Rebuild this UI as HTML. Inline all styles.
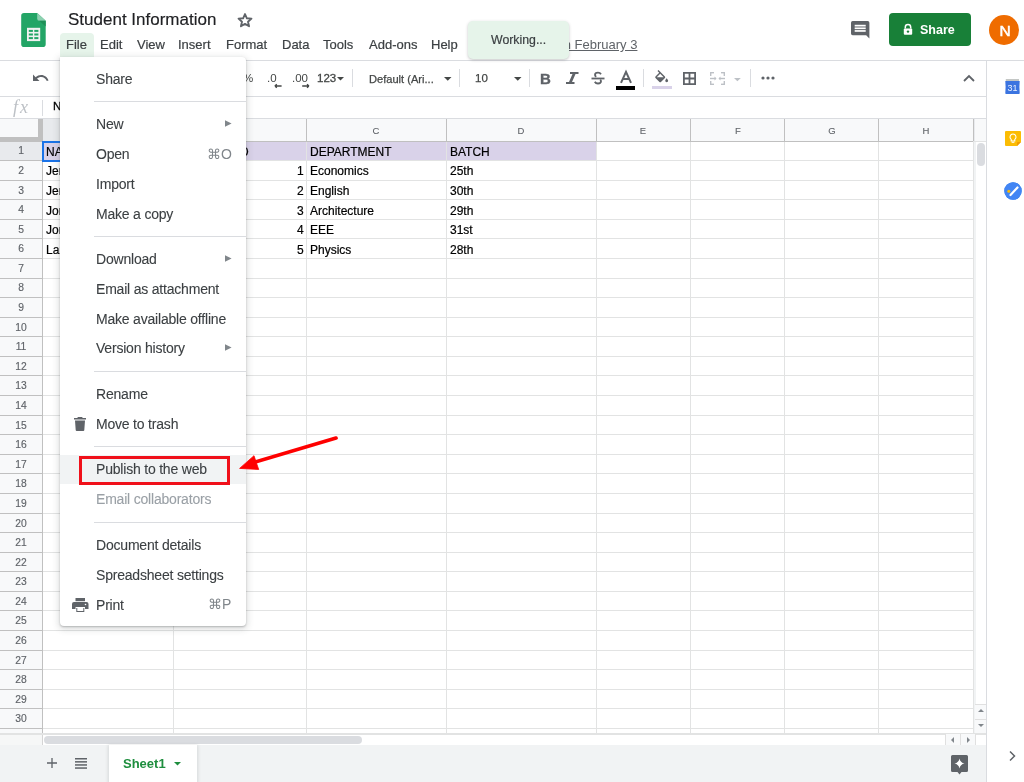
<!DOCTYPE html>
<html><head><meta charset="utf-8"><style>
html,body{margin:0;padding:0;width:1024px;height:782px;overflow:hidden;background:#fff;position:relative}
.t{position:absolute;white-space:nowrap;line-height:1;font-family:"Liberation Sans", sans-serif;will-change:transform}
.r{position:absolute;box-sizing:content-box}
svg.r{overflow:visible}
</style></head><body>
<div class="r" style="left:0.00px;top:118.50px;width:986.00px;height:22.50px;background:#f8f9fa;"></div>
<div class="r" style="left:0.00px;top:141.00px;width:42.50px;height:592.50px;background:#f8f9fa;"></div>
<div class="r" style="left:42.50px;top:118.50px;width:131.00px;height:22.50px;background:#e8eaed;"></div>
<div class="r" style="left:0.00px;top:141.00px;width:42.50px;height:19.50px;background:#e8eaed;"></div>
<div class="r" style="left:42.50px;top:141.00px;width:553.70px;height:19.50px;background:#d9d2e9;"></div>
<div class="r" style="left:42.50px;top:160.00px;width:930.90px;height:1.00px;background:#e2e3e3;"></div>
<div class="r" style="left:0.00px;top:160.00px;width:42.50px;height:1.00px;background:#c0c0c0;"></div>
<div class="r" style="left:42.50px;top:179.59px;width:930.90px;height:1.00px;background:#e2e3e3;"></div>
<div class="r" style="left:0.00px;top:179.59px;width:42.50px;height:1.00px;background:#c0c0c0;"></div>
<div class="r" style="left:42.50px;top:199.17px;width:930.90px;height:1.00px;background:#e2e3e3;"></div>
<div class="r" style="left:0.00px;top:199.17px;width:42.50px;height:1.00px;background:#c0c0c0;"></div>
<div class="r" style="left:42.50px;top:218.76px;width:930.90px;height:1.00px;background:#e2e3e3;"></div>
<div class="r" style="left:0.00px;top:218.76px;width:42.50px;height:1.00px;background:#c0c0c0;"></div>
<div class="r" style="left:42.50px;top:238.34px;width:930.90px;height:1.00px;background:#e2e3e3;"></div>
<div class="r" style="left:0.00px;top:238.34px;width:42.50px;height:1.00px;background:#c0c0c0;"></div>
<div class="r" style="left:42.50px;top:257.93px;width:930.90px;height:1.00px;background:#e2e3e3;"></div>
<div class="r" style="left:0.00px;top:257.93px;width:42.50px;height:1.00px;background:#c0c0c0;"></div>
<div class="r" style="left:42.50px;top:277.52px;width:930.90px;height:1.00px;background:#e2e3e3;"></div>
<div class="r" style="left:0.00px;top:277.52px;width:42.50px;height:1.00px;background:#c0c0c0;"></div>
<div class="r" style="left:42.50px;top:297.10px;width:930.90px;height:1.00px;background:#e2e3e3;"></div>
<div class="r" style="left:0.00px;top:297.10px;width:42.50px;height:1.00px;background:#c0c0c0;"></div>
<div class="r" style="left:42.50px;top:316.69px;width:930.90px;height:1.00px;background:#e2e3e3;"></div>
<div class="r" style="left:0.00px;top:316.69px;width:42.50px;height:1.00px;background:#c0c0c0;"></div>
<div class="r" style="left:42.50px;top:336.27px;width:930.90px;height:1.00px;background:#e2e3e3;"></div>
<div class="r" style="left:0.00px;top:336.27px;width:42.50px;height:1.00px;background:#c0c0c0;"></div>
<div class="r" style="left:42.50px;top:355.86px;width:930.90px;height:1.00px;background:#e2e3e3;"></div>
<div class="r" style="left:0.00px;top:355.86px;width:42.50px;height:1.00px;background:#c0c0c0;"></div>
<div class="r" style="left:42.50px;top:375.45px;width:930.90px;height:1.00px;background:#e2e3e3;"></div>
<div class="r" style="left:0.00px;top:375.45px;width:42.50px;height:1.00px;background:#c0c0c0;"></div>
<div class="r" style="left:42.50px;top:395.03px;width:930.90px;height:1.00px;background:#e2e3e3;"></div>
<div class="r" style="left:0.00px;top:395.03px;width:42.50px;height:1.00px;background:#c0c0c0;"></div>
<div class="r" style="left:42.50px;top:414.62px;width:930.90px;height:1.00px;background:#e2e3e3;"></div>
<div class="r" style="left:0.00px;top:414.62px;width:42.50px;height:1.00px;background:#c0c0c0;"></div>
<div class="r" style="left:42.50px;top:434.20px;width:930.90px;height:1.00px;background:#e2e3e3;"></div>
<div class="r" style="left:0.00px;top:434.20px;width:42.50px;height:1.00px;background:#c0c0c0;"></div>
<div class="r" style="left:42.50px;top:453.79px;width:930.90px;height:1.00px;background:#e2e3e3;"></div>
<div class="r" style="left:0.00px;top:453.79px;width:42.50px;height:1.00px;background:#c0c0c0;"></div>
<div class="r" style="left:42.50px;top:473.38px;width:930.90px;height:1.00px;background:#e2e3e3;"></div>
<div class="r" style="left:0.00px;top:473.38px;width:42.50px;height:1.00px;background:#c0c0c0;"></div>
<div class="r" style="left:42.50px;top:492.96px;width:930.90px;height:1.00px;background:#e2e3e3;"></div>
<div class="r" style="left:0.00px;top:492.96px;width:42.50px;height:1.00px;background:#c0c0c0;"></div>
<div class="r" style="left:42.50px;top:512.55px;width:930.90px;height:1.00px;background:#e2e3e3;"></div>
<div class="r" style="left:0.00px;top:512.55px;width:42.50px;height:1.00px;background:#c0c0c0;"></div>
<div class="r" style="left:42.50px;top:532.13px;width:930.90px;height:1.00px;background:#e2e3e3;"></div>
<div class="r" style="left:0.00px;top:532.13px;width:42.50px;height:1.00px;background:#c0c0c0;"></div>
<div class="r" style="left:42.50px;top:551.72px;width:930.90px;height:1.00px;background:#e2e3e3;"></div>
<div class="r" style="left:0.00px;top:551.72px;width:42.50px;height:1.00px;background:#c0c0c0;"></div>
<div class="r" style="left:42.50px;top:571.31px;width:930.90px;height:1.00px;background:#e2e3e3;"></div>
<div class="r" style="left:0.00px;top:571.31px;width:42.50px;height:1.00px;background:#c0c0c0;"></div>
<div class="r" style="left:42.50px;top:590.89px;width:930.90px;height:1.00px;background:#e2e3e3;"></div>
<div class="r" style="left:0.00px;top:590.89px;width:42.50px;height:1.00px;background:#c0c0c0;"></div>
<div class="r" style="left:42.50px;top:610.48px;width:930.90px;height:1.00px;background:#e2e3e3;"></div>
<div class="r" style="left:0.00px;top:610.48px;width:42.50px;height:1.00px;background:#c0c0c0;"></div>
<div class="r" style="left:42.50px;top:630.06px;width:930.90px;height:1.00px;background:#e2e3e3;"></div>
<div class="r" style="left:0.00px;top:630.06px;width:42.50px;height:1.00px;background:#c0c0c0;"></div>
<div class="r" style="left:42.50px;top:649.65px;width:930.90px;height:1.00px;background:#e2e3e3;"></div>
<div class="r" style="left:0.00px;top:649.65px;width:42.50px;height:1.00px;background:#c0c0c0;"></div>
<div class="r" style="left:42.50px;top:669.24px;width:930.90px;height:1.00px;background:#e2e3e3;"></div>
<div class="r" style="left:0.00px;top:669.24px;width:42.50px;height:1.00px;background:#c0c0c0;"></div>
<div class="r" style="left:42.50px;top:688.82px;width:930.90px;height:1.00px;background:#e2e3e3;"></div>
<div class="r" style="left:0.00px;top:688.82px;width:42.50px;height:1.00px;background:#c0c0c0;"></div>
<div class="r" style="left:42.50px;top:708.41px;width:930.90px;height:1.00px;background:#e2e3e3;"></div>
<div class="r" style="left:0.00px;top:708.41px;width:42.50px;height:1.00px;background:#c0c0c0;"></div>
<div class="r" style="left:42.50px;top:727.99px;width:930.90px;height:1.00px;background:#e2e3e3;"></div>
<div class="r" style="left:0.00px;top:727.99px;width:42.50px;height:1.00px;background:#c0c0c0;"></div>
<div class="r" style="left:173.00px;top:141.00px;width:1.00px;height:592.50px;background:#e2e3e3;"></div>
<div class="r" style="left:173.00px;top:118.50px;width:1.00px;height:22.50px;background:#c0c0c0;"></div>
<div class="r" style="left:306.10px;top:141.00px;width:1.00px;height:592.50px;background:#e2e3e3;"></div>
<div class="r" style="left:306.10px;top:118.50px;width:1.00px;height:22.50px;background:#c0c0c0;"></div>
<div class="r" style="left:445.70px;top:141.00px;width:1.00px;height:592.50px;background:#e2e3e3;"></div>
<div class="r" style="left:445.70px;top:118.50px;width:1.00px;height:22.50px;background:#c0c0c0;"></div>
<div class="r" style="left:595.70px;top:141.00px;width:1.00px;height:592.50px;background:#e2e3e3;"></div>
<div class="r" style="left:595.70px;top:118.50px;width:1.00px;height:22.50px;background:#c0c0c0;"></div>
<div class="r" style="left:689.90px;top:141.00px;width:1.00px;height:592.50px;background:#e2e3e3;"></div>
<div class="r" style="left:689.90px;top:118.50px;width:1.00px;height:22.50px;background:#c0c0c0;"></div>
<div class="r" style="left:784.10px;top:141.00px;width:1.00px;height:592.50px;background:#e2e3e3;"></div>
<div class="r" style="left:784.10px;top:118.50px;width:1.00px;height:22.50px;background:#c0c0c0;"></div>
<div class="r" style="left:878.30px;top:141.00px;width:1.00px;height:592.50px;background:#e2e3e3;"></div>
<div class="r" style="left:878.30px;top:118.50px;width:1.00px;height:22.50px;background:#c0c0c0;"></div>
<div class="r" style="left:972.90px;top:141.00px;width:1.00px;height:592.50px;background:#e2e3e3;"></div>
<div class="r" style="left:972.90px;top:118.50px;width:1.00px;height:22.50px;background:#c0c0c0;"></div>
<div class="r" style="left:0.00px;top:140.50px;width:973.40px;height:1.00px;background:#c0c0c0;"></div>
<div class="r" style="left:42.00px;top:141.00px;width:1.00px;height:592.50px;background:#c0c0c0;"></div>
<div class="r" style="left:0.00px;top:137.00px;width:43.00px;height:4.50px;background:#c0c0c0;"></div>
<div class="r" style="left:38.00px;top:118.50px;width:4.50px;height:23.00px;background:#c0c0c0;"></div>
<div class="r" style="left:0.00px;top:118.00px;width:986.00px;height:1.00px;background:#e0e0e0;"></div>
<div class="t" style="left:58.00px;width:100px;text-align:center;top:125.96px;font-size:9.5px;color:#5f6368;font-weight:400;-webkit-text-stroke:0.1px #5f6368">A</div>
<div class="t" style="left:190.05px;width:100px;text-align:center;top:125.96px;font-size:9.5px;color:#5f6368;font-weight:400;-webkit-text-stroke:0.1px #5f6368">B</div>
<div class="t" style="left:326.40px;width:100px;text-align:center;top:125.96px;font-size:9.5px;color:#5f6368;font-weight:400;-webkit-text-stroke:0.1px #5f6368">C</div>
<div class="t" style="left:471.20px;width:100px;text-align:center;top:125.96px;font-size:9.5px;color:#5f6368;font-weight:400;-webkit-text-stroke:0.1px #5f6368">D</div>
<div class="t" style="left:593.30px;width:100px;text-align:center;top:125.96px;font-size:9.5px;color:#5f6368;font-weight:400;-webkit-text-stroke:0.1px #5f6368">E</div>
<div class="t" style="left:687.50px;width:100px;text-align:center;top:125.96px;font-size:9.5px;color:#5f6368;font-weight:400;-webkit-text-stroke:0.1px #5f6368">F</div>
<div class="t" style="left:781.70px;width:100px;text-align:center;top:125.96px;font-size:9.5px;color:#5f6368;font-weight:400;-webkit-text-stroke:0.1px #5f6368">G</div>
<div class="t" style="left:876.10px;width:100px;text-align:center;top:125.96px;font-size:9.5px;color:#5f6368;font-weight:400;-webkit-text-stroke:0.1px #5f6368">H</div>
<div class="t" style="left:-29.00px;width:100px;text-align:center;top:146.37px;font-size:10.3px;color:#5f6368;font-weight:400;-webkit-text-stroke:0.15px #5f6368">1</div>
<div class="t" style="left:-29.00px;width:100px;text-align:center;top:165.96px;font-size:10.3px;color:#5f6368;font-weight:400;-webkit-text-stroke:0.15px #5f6368">2</div>
<div class="t" style="left:-29.00px;width:100px;text-align:center;top:185.55px;font-size:10.3px;color:#5f6368;font-weight:400;-webkit-text-stroke:0.15px #5f6368">3</div>
<div class="t" style="left:-29.00px;width:100px;text-align:center;top:205.13px;font-size:10.3px;color:#5f6368;font-weight:400;-webkit-text-stroke:0.15px #5f6368">4</div>
<div class="t" style="left:-29.00px;width:100px;text-align:center;top:224.72px;font-size:10.3px;color:#5f6368;font-weight:400;-webkit-text-stroke:0.15px #5f6368">5</div>
<div class="t" style="left:-29.00px;width:100px;text-align:center;top:244.30px;font-size:10.3px;color:#5f6368;font-weight:400;-webkit-text-stroke:0.15px #5f6368">6</div>
<div class="t" style="left:-29.00px;width:100px;text-align:center;top:263.89px;font-size:10.3px;color:#5f6368;font-weight:400;-webkit-text-stroke:0.15px #5f6368">7</div>
<div class="t" style="left:-29.00px;width:100px;text-align:center;top:283.48px;font-size:10.3px;color:#5f6368;font-weight:400;-webkit-text-stroke:0.15px #5f6368">8</div>
<div class="t" style="left:-29.00px;width:100px;text-align:center;top:303.06px;font-size:10.3px;color:#5f6368;font-weight:400;-webkit-text-stroke:0.15px #5f6368">9</div>
<div class="t" style="left:-29.00px;width:100px;text-align:center;top:322.65px;font-size:10.3px;color:#5f6368;font-weight:400;-webkit-text-stroke:0.15px #5f6368">10</div>
<div class="t" style="left:-29.00px;width:100px;text-align:center;top:342.23px;font-size:10.3px;color:#5f6368;font-weight:400;-webkit-text-stroke:0.15px #5f6368">11</div>
<div class="t" style="left:-29.00px;width:100px;text-align:center;top:361.82px;font-size:10.3px;color:#5f6368;font-weight:400;-webkit-text-stroke:0.15px #5f6368">12</div>
<div class="t" style="left:-29.00px;width:100px;text-align:center;top:381.41px;font-size:10.3px;color:#5f6368;font-weight:400;-webkit-text-stroke:0.15px #5f6368">13</div>
<div class="t" style="left:-29.00px;width:100px;text-align:center;top:400.99px;font-size:10.3px;color:#5f6368;font-weight:400;-webkit-text-stroke:0.15px #5f6368">14</div>
<div class="t" style="left:-29.00px;width:100px;text-align:center;top:420.58px;font-size:10.3px;color:#5f6368;font-weight:400;-webkit-text-stroke:0.15px #5f6368">15</div>
<div class="t" style="left:-29.00px;width:100px;text-align:center;top:440.16px;font-size:10.3px;color:#5f6368;font-weight:400;-webkit-text-stroke:0.15px #5f6368">16</div>
<div class="t" style="left:-29.00px;width:100px;text-align:center;top:459.75px;font-size:10.3px;color:#5f6368;font-weight:400;-webkit-text-stroke:0.15px #5f6368">17</div>
<div class="t" style="left:-29.00px;width:100px;text-align:center;top:479.34px;font-size:10.3px;color:#5f6368;font-weight:400;-webkit-text-stroke:0.15px #5f6368">18</div>
<div class="t" style="left:-29.00px;width:100px;text-align:center;top:498.92px;font-size:10.3px;color:#5f6368;font-weight:400;-webkit-text-stroke:0.15px #5f6368">19</div>
<div class="t" style="left:-29.00px;width:100px;text-align:center;top:518.51px;font-size:10.3px;color:#5f6368;font-weight:400;-webkit-text-stroke:0.15px #5f6368">20</div>
<div class="t" style="left:-29.00px;width:100px;text-align:center;top:538.09px;font-size:10.3px;color:#5f6368;font-weight:400;-webkit-text-stroke:0.15px #5f6368">21</div>
<div class="t" style="left:-29.00px;width:100px;text-align:center;top:557.68px;font-size:10.3px;color:#5f6368;font-weight:400;-webkit-text-stroke:0.15px #5f6368">22</div>
<div class="t" style="left:-29.00px;width:100px;text-align:center;top:577.27px;font-size:10.3px;color:#5f6368;font-weight:400;-webkit-text-stroke:0.15px #5f6368">23</div>
<div class="t" style="left:-29.00px;width:100px;text-align:center;top:596.85px;font-size:10.3px;color:#5f6368;font-weight:400;-webkit-text-stroke:0.15px #5f6368">24</div>
<div class="t" style="left:-29.00px;width:100px;text-align:center;top:616.44px;font-size:10.3px;color:#5f6368;font-weight:400;-webkit-text-stroke:0.15px #5f6368">25</div>
<div class="t" style="left:-29.00px;width:100px;text-align:center;top:636.02px;font-size:10.3px;color:#5f6368;font-weight:400;-webkit-text-stroke:0.15px #5f6368">26</div>
<div class="t" style="left:-29.00px;width:100px;text-align:center;top:655.61px;font-size:10.3px;color:#5f6368;font-weight:400;-webkit-text-stroke:0.15px #5f6368">27</div>
<div class="t" style="left:-29.00px;width:100px;text-align:center;top:675.20px;font-size:10.3px;color:#5f6368;font-weight:400;-webkit-text-stroke:0.15px #5f6368">28</div>
<div class="t" style="left:-29.00px;width:100px;text-align:center;top:694.78px;font-size:10.3px;color:#5f6368;font-weight:400;-webkit-text-stroke:0.15px #5f6368">29</div>
<div class="t" style="left:-29.00px;width:100px;text-align:center;top:714.37px;font-size:10.3px;color:#5f6368;font-weight:400;-webkit-text-stroke:0.15px #5f6368">30</div>
<div class="t" style="left:45.50px;top:145.84px;font-size:12px;color:#000;font-weight:400;-webkit-text-stroke:0.2px #000">NAME</div>
<div class="t" style="left:177.00px;top:145.84px;font-size:12px;color:#000;font-weight:400;-webkit-text-stroke:0.2px #000">STUDENT ID</div>
<div class="t" style="left:309.90px;top:145.84px;font-size:12px;color:#000;font-weight:400;-webkit-text-stroke:0.2px #000">DEPARTMENT</div>
<div class="t" style="left:449.50px;top:145.84px;font-size:12px;color:#000;font-weight:400;-webkit-text-stroke:0.2px #000">BATCH</div>
<div class="t" style="left:45.50px;top:165.43px;font-size:12px;color:#000;font-weight:400;-webkit-text-stroke:0.2px #000">Jerry</div>
<div class="t" style="right:720.40px;top:165.43px;font-size:12px;color:#000;font-weight:400;-webkit-text-stroke:0.2px #000">1</div>
<div class="t" style="left:309.90px;top:165.43px;font-size:12px;color:#000;font-weight:400;-webkit-text-stroke:0.2px #000">Economics</div>
<div class="t" style="left:449.50px;top:165.43px;font-size:12px;color:#000;font-weight:400;-webkit-text-stroke:0.2px #000">25th</div>
<div class="t" style="left:45.50px;top:185.01px;font-size:12px;color:#000;font-weight:400;-webkit-text-stroke:0.2px #000">Jeremy</div>
<div class="t" style="right:720.40px;top:185.01px;font-size:12px;color:#000;font-weight:400;-webkit-text-stroke:0.2px #000">2</div>
<div class="t" style="left:309.90px;top:185.01px;font-size:12px;color:#000;font-weight:400;-webkit-text-stroke:0.2px #000">English</div>
<div class="t" style="left:449.50px;top:185.01px;font-size:12px;color:#000;font-weight:400;-webkit-text-stroke:0.2px #000">30th</div>
<div class="t" style="left:45.50px;top:204.60px;font-size:12px;color:#000;font-weight:400;-webkit-text-stroke:0.2px #000">Jordan</div>
<div class="t" style="right:720.40px;top:204.60px;font-size:12px;color:#000;font-weight:400;-webkit-text-stroke:0.2px #000">3</div>
<div class="t" style="left:309.90px;top:204.60px;font-size:12px;color:#000;font-weight:400;-webkit-text-stroke:0.2px #000">Architecture</div>
<div class="t" style="left:449.50px;top:204.60px;font-size:12px;color:#000;font-weight:400;-webkit-text-stroke:0.2px #000">29th</div>
<div class="t" style="left:45.50px;top:224.19px;font-size:12px;color:#000;font-weight:400;-webkit-text-stroke:0.2px #000">Jorge</div>
<div class="t" style="right:720.40px;top:224.19px;font-size:12px;color:#000;font-weight:400;-webkit-text-stroke:0.2px #000">4</div>
<div class="t" style="left:309.90px;top:224.19px;font-size:12px;color:#000;font-weight:400;-webkit-text-stroke:0.2px #000">EEE</div>
<div class="t" style="left:449.50px;top:224.19px;font-size:12px;color:#000;font-weight:400;-webkit-text-stroke:0.2px #000">31st</div>
<div class="t" style="left:45.50px;top:243.77px;font-size:12px;color:#000;font-weight:400;-webkit-text-stroke:0.2px #000">Larry</div>
<div class="t" style="right:720.40px;top:243.77px;font-size:12px;color:#000;font-weight:400;-webkit-text-stroke:0.2px #000">5</div>
<div class="t" style="left:309.90px;top:243.77px;font-size:12px;color:#000;font-weight:400;-webkit-text-stroke:0.2px #000">Physics</div>
<div class="t" style="left:449.50px;top:243.77px;font-size:12px;color:#000;font-weight:400;-webkit-text-stroke:0.2px #000">28th</div>
<div class="r" style="left:42.0px;top:140.5px;width:130.0px;height:17.5px;border:2px solid #1a73e8"></div>
<div class="r" style="left:973.90px;top:119.00px;width:12.10px;height:614.50px;background:#f8f9fa;"></div>
<div class="r" style="left:973.90px;top:141.00px;width:12.10px;height:592.50px;background:#fff;"></div>
<div class="r" style="left:973.90px;top:141.00px;width:2.00px;height:592.50px;background:#f1f3f4;"></div>
<div class="r" style="left:973.90px;top:140.50px;width:12.10px;height:1.00px;background:#e2e3e3;"></div>
<div class="r" style="left:973.70px;top:118.50px;width:1.00px;height:22.50px;background:#e8eaed;"></div>
<div class="r" style="left:976.80px;top:142.80px;width:8.20px;height:23.50px;background:#dadce0;border-radius:4px"></div>
<div class="r" style="left:0.00px;top:733.50px;width:986.00px;height:11.50px;background:#fff;"></div>
<div class="r" style="left:0.00px;top:733.50px;width:42.50px;height:11.50px;background:#f6f7f7;"></div>
<div class="r" style="left:42.00px;top:733.50px;width:1.00px;height:11.50px;background:#d5d5d5;"></div>
<div class="r" style="left:0.00px;top:733.00px;width:986.00px;height:1.50px;background:#e2e3e3;"></div>
<div class="r" style="left:0.00px;top:0.00px;width:1024.00px;height:60.00px;background:#fff;"></div>
<div class="r" style="left:0.00px;top:59.50px;width:1024.00px;height:1.00px;background:#dadce0;"></div>
<svg class="r" style="left:21px;top:13px" width="25" height="34" viewBox="0 0 25 34">
<path d="M3 0H16.2L24.7 7.7V31.2A2.8 2.8 0 0 1 21.9 34H3A2.8 2.8 0 0 1 0.2 31.2V2.8A2.8 2.8 0 0 1 3 0Z" fill="#23a566"/>
<path d="M16.2 0L24.7 7.7H18.2A2 2 0 0 1 16.2 5.7Z" fill="#8ed1b1"/>
<path d="M18.2 7.7L24.7 13.5V7.7Z" fill="#1e8f57"/>
<rect x="6" y="14.8" width="13.2" height="13.3" fill="#f1f1f1"/>
<g fill="#23a566"><rect x="7.8" y="16.9" width="4.1" height="2"/><rect x="13.3" y="16.9" width="4.1" height="2"/>
<rect x="7.8" y="20.5" width="4.1" height="2"/><rect x="13.3" y="20.5" width="4.1" height="2"/>
<rect x="7.8" y="24.1" width="4.1" height="2"/><rect x="13.3" y="24.1" width="4.1" height="2"/></g>
</svg>
<div class="t" style="left:67.50px;top:10.81px;font-size:17px;color:#202124;font-weight:400;-webkit-text-stroke:0.15px #202124">Student Information</div>
<svg class="r" style="left:237px;top:12.2px" width="16" height="16" viewBox="0 0 24 24"><path d="M12 3l2.8 6.4 6.9.6-5.2 4.6 1.6 6.8-6.1-3.6-6.1 3.6 1.6-6.8L2.3 10l6.9-.6z" fill="none" stroke="#5f6368" stroke-width="2.8" stroke-linejoin="round"/></svg>
<div class="r" style="left:59.70px;top:32.50px;width:34.10px;height:24.50px;background:#e6f4ea;border-radius:4px 4px 0 0"></div>
<div class="t" style="left:66.30px;top:38.30px;font-size:13px;color:#3c4043;font-weight:400;-webkit-text-stroke:0.2px #3c4043">File</div>
<div class="t" style="left:100.10px;top:38.30px;font-size:13px;color:#3c4043;font-weight:400;-webkit-text-stroke:0.2px #3c4043">Edit</div>
<div class="t" style="left:136.60px;top:38.30px;font-size:13px;color:#3c4043;font-weight:400;-webkit-text-stroke:0.2px #3c4043">View</div>
<div class="t" style="left:178.00px;top:38.30px;font-size:13px;color:#3c4043;font-weight:400;-webkit-text-stroke:0.2px #3c4043">Insert</div>
<div class="t" style="left:226.20px;top:38.30px;font-size:13px;color:#3c4043;font-weight:400;-webkit-text-stroke:0.2px #3c4043">Format</div>
<div class="t" style="left:282.10px;top:38.30px;font-size:13px;color:#3c4043;font-weight:400;-webkit-text-stroke:0.2px #3c4043">Data</div>
<div class="t" style="left:323.10px;top:38.30px;font-size:13px;color:#3c4043;font-weight:400;-webkit-text-stroke:0.2px #3c4043">Tools</div>
<div class="t" style="left:368.60px;top:38.30px;font-size:13px;color:#3c4043;font-weight:400;-webkit-text-stroke:0.2px #3c4043">Add-ons</div>
<div class="t" style="left:431.10px;top:38.30px;font-size:13px;color:#3c4043;font-weight:400;-webkit-text-stroke:0.2px #3c4043">Help</div>
<div class="t" style="right:387.00px;top:38.20px;font-size:13px;color:#5f6368;font-weight:400;text-decoration:underline">Last edit was on February 3</div>
<div class="r" style="left:468.20px;top:21.40px;width:101.20px;height:37.60px;background:#e6f4ea;border-radius:5px;box-shadow:0 1px 3px rgba(60,64,67,.3)"></div>
<div class="t" style="left:491.20px;top:34.49px;font-size:12.3px;color:#3c4043;font-weight:400;-webkit-text-stroke:0.2px #3c4043">Working...</div>
<svg class="r" style="left:850.9px;top:20.5px" width="18.4" height="18" viewBox="0 0 20 19" preserveAspectRatio="none"><path d="M1.8 0H18.2A1.8 1.8 0 0 1 20 1.8V18.5L16.5 15H1.8A1.8 1.8 0 0 1 0 13.2V1.8A1.8 1.8 0 0 1 1.8 0Z" fill="#5f6368"/><rect x="4" y="4" width="12" height="1.8" fill="#fff"/><rect x="4" y="6.8" width="12" height="1.8" fill="#fff"/><rect x="4" y="9.6" width="12" height="1.8" fill="#fff"/></svg>
<div class="r" style="left:889.00px;top:13.10px;width:81.80px;height:33.20px;background:#188038;border-radius:4px"></div>
<svg class="r" style="left:902.5px;top:24px" width="10" height="11" viewBox="0 0 10 11"><path d="M2.3 4.5V3.2A2.7 2.7 0 0 1 7.7 3.2V4.5" fill="none" stroke="#fff" stroke-width="1.5"/><rect x="0.8" y="4.4" width="8.4" height="6.4" rx="1" fill="#fff"/><circle cx="5" cy="7.6" r="1.2" fill="#188038"/></svg>
<div class="t" style="left:920.00px;top:23.72px;font-size:12.5px;color:#fff;font-weight:700;">Share</div>
<div class="r" style="left:989.3px;top:14.9px;width:30px;height:30px;border-radius:50%;background:#ef6c00"></div>
<div class="t" style="left:954.50px;width:100px;text-align:center;top:23.18px;font-size:15.5px;color:#fff;font-weight:400;-webkit-text-stroke:0.5px #fff">N</div>
<div class="r" style="left:0.00px;top:96.00px;width:986.00px;height:1.00px;background:#dadce0;"></div>
<div class="r" style="left:986.00px;top:60.00px;width:1.00px;height:722.00px;background:#dadce0;"></div>
<svg class="r" style="left:31.2px;top:70px" width="18" height="14" viewBox="0 0 18 14"><path d="M2 4.5V11H8.5L6 8.5C7.2 7.5 8.6 6.9 10.2 6.9C12.8 6.9 15 8.6 15.8 11L17.5 10.4C16.4 7.3 13.6 5 10.2 5C8.1 5 6.2 5.8 4.7 7.2Z" fill="#5f6368"/></svg>
<div class="t" style="left:243.00px;top:73.17px;font-size:11.5px;color:#444746;font-weight:400;">%</div>
<div class="t" style="left:267.10px;top:73.17px;font-size:11.5px;color:#444746;font-weight:400;">.0</div>
<div class="t" style="left:292.10px;top:73.17px;font-size:11.5px;color:#444746;font-weight:400;">.00</div>
<svg class="r" style="left:274px;top:83.5px" width="36" height="4" viewBox="0 0 36 4"><path d="M0.8 2H7.6M0.8 2L2.8 0.3M0.8 2L2.8 3.7" stroke="#444746" stroke-width="1.3" fill="none"/><path d="M28.2 2H35M35 2L33 0.3M35 2L33 3.7" stroke="#444746" stroke-width="1.3" fill="none"/></svg>
<div class="t" style="left:317.40px;top:73.17px;font-size:11.5px;color:#444746;font-weight:400;-webkit-text-stroke:0.3px #444746">123</div>
<svg class="r" style="left:337.2px;top:77.2px" width="7" height="3.5" viewBox="0 0 8 4" preserveAspectRatio="none"><path d="M0 0H8L4 4Z" fill="#444746"/></svg>
<div class="r" style="left:352.20px;top:69.00px;width:1.00px;height:18.00px;background:#dadce0;"></div>
<div class="t" style="left:369.30px;top:73.50px;font-size:11.1px;color:#444746;font-weight:400;-webkit-text-stroke:0.25px #444746">Default (Ari...</div>
<svg class="r" style="left:443.5px;top:77.2px" width="7.5" height="3.8" viewBox="0 0 8 4" preserveAspectRatio="none"><path d="M0 0H8L4 4Z" fill="#444746"/></svg>
<div class="r" style="left:459.00px;top:69.00px;width:1.00px;height:18.00px;background:#dadce0;"></div>
<div class="t" style="left:475.20px;top:72.87px;font-size:11.5px;color:#444746;font-weight:400;-webkit-text-stroke:0.25px #444746">10</div>
<svg class="r" style="left:513.8px;top:77.2px" width="7.5" height="3.8" viewBox="0 0 8 4" preserveAspectRatio="none"><path d="M0 0H8L4 4Z" fill="#444746"/></svg>
<div class="r" style="left:528.50px;top:69.00px;width:1.00px;height:18.00px;background:#dadce0;"></div>
<div class="t" style="left:540.30px;top:71.20px;font-size:15px;color:#5f6368;font-weight:700;-webkit-text-stroke:0.35px #5f6368">B</div>
<svg class="r" style="left:565px;top:72px" width="14" height="12" viewBox="0 0 14 12"><path d="M5 0H13.5V2H10.5L7 10H9.5V12H1V10H4L7.5 2H5Z" fill="#5f6368"/></svg>
<svg class="r" style="left:591px;top:71px" width="14" height="14" viewBox="0 0 14 14"><path d="M10 3.2C9.4 2.2 8.3 1.7 7 1.7C5.2 1.7 4 2.6 4 3.9C4 4.8 4.5 5.3 5.3 5.7" fill="none" stroke="#5f6368" stroke-width="1.8"/><path d="M9.2 8.8C9.8 9.3 10 9.8 10 10.3C10 11.6 8.8 12.5 7 12.5C5.5 12.5 4.4 11.9 3.8 10.8" fill="none" stroke="#5f6368" stroke-width="1.8"/><rect x="0.5" y="6.6" width="13" height="1.8" fill="#5f6368"/></svg>
<svg class="r" style="left:619.5px;top:71px" width="12" height="12" viewBox="0 0 12 12"><path d="M1 11.8L6 0.8L11 11.8M2.9 7.9H9.1" fill="none" stroke="#5f6368" stroke-width="2"/></svg>
<div class="r" style="left:616.00px;top:85.50px;width:19.00px;height:4.00px;background:#000;"></div>
<div class="r" style="left:643.00px;top:69.00px;width:1.00px;height:18.00px;background:#dadce0;"></div>
<svg class="r" style="left:652.6px;top:69.8px" width="17.3" height="17.3" viewBox="0 0 24 24"><path d="M16.56 8.94L7.62 0 6.21 1.41l2.38 2.38-5.15 5.15c-.59.59-.59 1.540 0 2.12l5.5 5.5c.29.29.68.44 1.06.44s.77-.15 1.06-.44l5.5-5.5c.59-.58.59-1.53 0-2.12zM5.21 10L10 5.21 14.79 10H5.21zM19 11.5s-2 2.17-2 3.5c0 1.1.9 2 2 2s2-.9 2-2c0-1.33-2-3.5-2-3.5z" fill="#5f6368"/></svg>
<div class="r" style="left:652.00px;top:86.00px;width:20.00px;height:3.00px;background:#d9d2e9;"></div>
<svg class="r" style="left:683px;top:71.6px" width="13" height="13" viewBox="0 0 13 13"><path d="M0 0H13V13H0ZM1.8 1.8V5.6H5.6V1.8ZM7.4 1.8V5.6H11.2V1.8ZM1.8 7.4V11.2H5.6V7.4ZM7.4 7.4V11.2H11.2V7.4Z" fill="#5f6368" fill-rule="evenodd"/></svg>
<svg class="r" style="left:710px;top:72px" width="15" height="13" viewBox="0 0 15 13"><g fill="#bdc1c6"><rect x="0" y="0" width="4" height="1.4"/><rect x="11" y="0" width="4" height="1.4"/><rect x="0" y="11.6" width="4" height="1.4"/><rect x="11" y="11.6" width="4" height="1.4"/><rect x="0" y="0" width="1.4" height="4"/><rect x="13.6" y="0" width="1.4" height="4"/><rect x="0" y="9" width="1.4" height="4"/><rect x="13.6" y="9" width="1.4" height="4"/><rect x="0" y="5.8" width="6" height="1.4"/><rect x="9" y="5.8" width="6" height="1.4"/><path d="M6.5 6.5L4.5 4.5V8.5Z"/><path d="M8.5 6.5L10.5 4.5V8.5Z"/></g></svg>
<svg class="r" style="left:734.4px;top:77.5px" width="6.8" height="3.2" viewBox="0 0 8 4" preserveAspectRatio="none"><path d="M0 0H8L4 4Z" fill="#bdc1c6"/></svg>
<div class="r" style="left:750.00px;top:69.00px;width:1.00px;height:18.00px;background:#dadce0;"></div>
<svg class="r" style="left:761px;top:76px" width="14" height="4" viewBox="0 0 14 4"><circle cx="2" cy="2" r="1.6" fill="#5f6368"/><circle cx="7" cy="2" r="1.6" fill="#5f6368"/><circle cx="12" cy="2" r="1.6" fill="#5f6368"/></svg>
<svg class="r" style="left:963px;top:74px" width="12" height="8" viewBox="0 0 12 8"><path d="M1 7L6 2L11 7" fill="none" stroke="#5f6368" stroke-width="1.8"/></svg>
<div class="t" style="left:12.50px;top:97.56px;font-size:18px;color:#bdc1c6;font-weight:400;font-family:'Liberation Serif',serif;letter-spacing:2px"><i>fx</i></div>
<div class="r" style="left:42.00px;top:100.00px;width:1.00px;height:15.50px;background:#dadce0;"></div>
<div class="t" style="left:53.00px;top:101.37px;font-size:11.5px;color:#000;font-weight:400;-webkit-text-stroke:0.3px #000">NAME</div>
<div class="r" style="left:0.00px;top:118.00px;width:986.00px;height:1.00px;background:#dadce0;"></div>
<svg class="r" style="left:1005px;top:79px" width="15" height="15" viewBox="0 0 15 15"><rect x="0.8" y="0" width="13.2" height="2.2" fill="#c4c7c5"/><path d="M0.3 2H14.7L14.4 8L14.7 14.2A0.8 0.8 0 0 1 13.9 15H1.1A0.8 0.8 0 0 1 0.3 14.2L0.6 8Z" fill="#3b74e0"/><text x="7.5" y="12.3" font-size="9" fill="#e8f0fe" text-anchor="middle" font-family="Liberation Sans">31</text></svg>
<svg class="r" style="left:1005px;top:131px" width="16" height="15" viewBox="0 0 16 15"><path d="M1 0H15A1 1 0 0 1 16 1V11L12 15H1A1 1 0 0 1 0 14V1A1 1 0 0 1 1 0Z" fill="#fbbc04"/><path d="M12 15L16 11H13A1 1 0 0 0 12 12Z" fill="#f29900"/><path d="M8 3A3 3 0 0 0 6.2 8.4V10H9.8V8.4A3 3 0 0 0 8 3Z" fill="none" stroke="#fff" stroke-width="1.1"/><rect x="6.6" y="10.8" width="2.8" height="1" fill="#fff"/></svg>
<svg class="r" style="left:1004px;top:182px" width="18" height="18" viewBox="0 0 18 18"><circle cx="9" cy="9" r="8.7" fill="#1a73e8" opacity="0.9"/><circle cx="9" cy="9" r="8.7" fill="#4285f4"/><path d="M6.5 13L13.5 5.5" stroke="#fff" stroke-width="2.2" stroke-linecap="round"/><circle cx="4.8" cy="9.3" r="1.5" fill="#fbbc04"/></svg>
<svg class="r" style="left:1008px;top:750px" width="8" height="12" viewBox="0 0 8 12"><path d="M2 1.5L6.5 6L2 10.5" fill="none" stroke="#5f6368" stroke-width="1.5"/></svg>
<div class="r" style="left:0.00px;top:745.00px;width:986.00px;height:37.00px;background:#f1f3f4;"></div>
<div class="r" style="left:43.70px;top:735.70px;width:318.30px;height:8.20px;background:#dadce0;border-radius:4px"></div>
<svg class="r" style="left:46px;top:757px" width="12" height="12" viewBox="0 0 12 12"><path d="M6 1V11M1 6H11" stroke="#5f6368" stroke-width="1.3"/></svg>
<svg class="r" style="left:75px;top:757.5px" width="12" height="11" viewBox="0 0 12 11"><g fill="#5f6368"><rect y="0" width="12" height="1.5"/><rect y="3.1" width="12" height="1.5"/><rect y="6.2" width="12" height="1.5"/><rect y="9.3" width="12" height="1.5"/></g></svg>
<div class="r" style="left:108.70px;top:745.00px;width:88.30px;height:37.00px;background:#fff;box-shadow:0 1px 3px 1px rgba(60,64,67,.15)"></div>
<div class="t" style="left:123.10px;top:757.00px;font-size:13px;color:#1e8e3e;font-weight:700;">Sheet1</div>
<svg class="r" style="left:174.3px;top:761.5px" width="7" height="3.5" viewBox="0 0 8 4" preserveAspectRatio="none"><path d="M0 0H8L4 4Z" fill="#1e8e3e"/></svg>
<div class="r" style="left:975.00px;top:704.40px;width:11.00px;height:29.10px;background:#f8f9fa;"></div>
<div class="r" style="left:975.00px;top:718.50px;width:11.00px;height:0.80px;background:#e0e0e0;"></div>
<div class="r" style="left:975.00px;top:704.00px;width:11.00px;height:0.80px;background:#e0e0e0;"></div>
<svg class="r" style="left:977.5px;top:709px" width="6" height="3" viewBox="0 0 6 3"><path d="M0 3H6L3 0Z" fill="#80868b"/></svg>
<svg class="r" style="left:977.5px;top:724px" width="6" height="3" viewBox="0 0 6 3"><path d="M0 0H6L3 3Z" fill="#80868b"/></svg>
<div class="r" style="left:945.30px;top:733.50px;width:29.40px;height:11.50px;background:#f8f9fa;"></div>
<div class="r" style="left:945.00px;top:733.50px;width:0.80px;height:11.50px;background:#e0e0e0;"></div>
<div class="r" style="left:960.00px;top:733.50px;width:0.80px;height:11.50px;background:#e0e0e0;"></div>
<div class="r" style="left:974.50px;top:733.50px;width:0.80px;height:11.50px;background:#e0e0e0;"></div>
<svg class="r" style="left:951px;top:736.5px" width="3" height="6" viewBox="0 0 3 6"><path d="M3 0V6L0 3Z" fill="#80868b"/></svg>
<svg class="r" style="left:966.5px;top:736.5px" width="3" height="6" viewBox="0 0 3 6"><path d="M0 0V6L3 3Z" fill="#80868b"/></svg>
<svg class="r" style="left:950.5px;top:755px" width="17" height="20" viewBox="0 0 17 20"><path d="M1.5 0H15.5A1.5 1.5 0 0 1 17 1.5V15.5A1.5 1.5 0 0 1 15.5 17H10.5L8.5 19.5L6.5 17H1.5A1.5 1.5 0 0 1 0 15.5V1.5A1.5 1.5 0 0 1 1.5 0Z" fill="#5f6368"/><path d="M8.5 3.5Q9.3 7.7 13.5 8.5Q9.3 9.3 8.5 13.5Q7.7 9.3 3.5 8.5Q7.7 7.7 8.5 3.5Z" fill="#fff"/></svg>
<div class="r" style="left:59.80px;top:56.70px;width:186.70px;height:569.30px;background:#fff;border-radius:0 4px 4px 4px;box-shadow:0 2px 6px 2px rgba(60,64,67,.15),0 1px 2px 0 rgba(60,64,67,.3)"></div>
<div class="r" style="left:59.80px;top:455.00px;width:186.70px;height:29.40px;background:#f1f3f4;"></div>
<div class="t" style="left:96.30px;top:71.75px;font-size:14px;color:#3c4043;font-weight:400;letter-spacing:-0.2px;-webkit-text-stroke:0.1px #3c4043">Share</div>
<div class="t" style="left:96.30px;top:117.25px;font-size:14px;color:#3c4043;font-weight:400;letter-spacing:-0.2px;-webkit-text-stroke:0.1px #3c4043">New</div>
<div class="t" style="left:96.30px;top:147.15px;font-size:14px;color:#3c4043;font-weight:400;letter-spacing:-0.2px;-webkit-text-stroke:0.1px #3c4043">Open</div>
<div class="t" style="left:96.30px;top:176.95px;font-size:14px;color:#3c4043;font-weight:400;letter-spacing:-0.2px;-webkit-text-stroke:0.1px #3c4043">Import</div>
<div class="t" style="left:96.30px;top:206.85px;font-size:14px;color:#3c4043;font-weight:400;letter-spacing:-0.2px;-webkit-text-stroke:0.1px #3c4043">Make a copy</div>
<div class="t" style="left:96.30px;top:251.75px;font-size:14px;color:#3c4043;font-weight:400;letter-spacing:-0.2px;-webkit-text-stroke:0.1px #3c4043">Download</div>
<div class="t" style="left:96.30px;top:281.65px;font-size:14px;color:#3c4043;font-weight:400;letter-spacing:-0.2px;-webkit-text-stroke:0.1px #3c4043">Email as attachment</div>
<div class="t" style="left:96.30px;top:311.65px;font-size:14px;color:#3c4043;font-weight:400;letter-spacing:-0.2px;-webkit-text-stroke:0.1px #3c4043">Make available offline</div>
<div class="t" style="left:96.30px;top:341.25px;font-size:14px;color:#3c4043;font-weight:400;letter-spacing:-0.2px;-webkit-text-stroke:0.1px #3c4043">Version history</div>
<div class="t" style="left:96.30px;top:386.65px;font-size:14px;color:#3c4043;font-weight:400;letter-spacing:-0.2px;-webkit-text-stroke:0.1px #3c4043">Rename</div>
<div class="t" style="left:96.30px;top:416.55px;font-size:14px;color:#3c4043;font-weight:400;letter-spacing:-0.2px;-webkit-text-stroke:0.1px #3c4043">Move to trash</div>
<div class="t" style="left:96.30px;top:462.35px;font-size:14px;color:#3c4043;font-weight:400;letter-spacing:-0.2px;-webkit-text-stroke:0.1px #3c4043">Publish to the web</div>
<div class="t" style="left:96.30px;top:491.95px;font-size:14px;color:#9aa0a6;font-weight:400;letter-spacing:-0.2px;-webkit-text-stroke:0.1px #9aa0a6">Email collaborators</div>
<div class="t" style="left:96.30px;top:537.75px;font-size:14px;color:#3c4043;font-weight:400;letter-spacing:-0.2px;-webkit-text-stroke:0.1px #3c4043">Document details</div>
<div class="t" style="left:96.30px;top:567.65px;font-size:14px;color:#3c4043;font-weight:400;letter-spacing:-0.2px;-webkit-text-stroke:0.1px #3c4043">Spreadsheet settings</div>
<div class="t" style="left:96.30px;top:597.55px;font-size:14px;color:#3c4043;font-weight:400;letter-spacing:-0.2px;-webkit-text-stroke:0.1px #3c4043">Print</div>
<div class="r" style="left:94.40px;top:100.80px;width:151.40px;height:1.00px;background:#dadce0;"></div>
<div class="r" style="left:94.40px;top:235.80px;width:151.40px;height:1.00px;background:#dadce0;"></div>
<div class="r" style="left:94.40px;top:370.50px;width:151.40px;height:1.00px;background:#dadce0;"></div>
<div class="r" style="left:94.40px;top:445.90px;width:151.40px;height:1.00px;background:#dadce0;"></div>
<div class="r" style="left:94.40px;top:521.70px;width:151.40px;height:1.00px;background:#dadce0;"></div>
<svg class="r" style="left:225px;top:120.40px" width="7" height="7" viewBox="0 0 7 7"><path d="M0 0.2L6.6 3.5L0 6.8Z" fill="#80868b"/></svg>
<svg class="r" style="left:225px;top:254.90px" width="7" height="7" viewBox="0 0 7 7"><path d="M0 0.2L6.6 3.5L0 6.8Z" fill="#80868b"/></svg>
<svg class="r" style="left:225px;top:344.40px" width="7" height="7" viewBox="0 0 7 7"><path d="M0 0.2L6.6 3.5L0 6.8Z" fill="#80868b"/></svg>
<div class="t" style="right:792.50px;top:146.95px;font-size:14px;color:#80868b;font-weight:400;">⌘O</div>
<div class="t" style="right:792.50px;top:597.35px;font-size:14px;color:#80868b;font-weight:400;">⌘P</div>
<svg class="r" style="left:74px;top:417px" width="12" height="14" viewBox="0 0 12 14"><path d="M4 0H8L8.8 1H12V2.6H0V1H3.2Z" fill="#5f6368"/><path d="M1 3.6H11L10.3 13A1 1 0 0 1 9.3 14H2.7A1 1 0 0 1 1.7 13Z" fill="#5f6368"/></svg>
<svg class="r" style="left:72px;top:597.5px" width="16.5" height="14" viewBox="0 0 16.5 14"><rect x="3.5" y="0" width="9.5" height="3.2" fill="#5f6368"/><path d="M2 4H14.5A2 2 0 0 1 16.5 6V11H13V9H3.5V11H0V6A2 2 0 0 1 2 4Z" fill="#5f6368"/><rect x="4.3" y="10" width="8" height="4" fill="#5f6368"/><rect x="5.3" y="10" width="6" height="3" fill="#fff"/><circle cx="13.5" cy="6.5" r="0.8" fill="#fff"/></svg>
<div class="r" style="left:79.3px;top:456px;width:144.6px;height:23.2px;border:3.3px solid #f0101a"></div>
<svg class="r" style="left:0;top:0" width="1024" height="782" viewBox="0 0 1024 782"><path d="M336 438L252 463" stroke="#fe0000" stroke-width="3.6" stroke-linecap="round"/><path d="M239.6 468.4L254 455.7L258.7 469.5Z" fill="#fe0000" stroke="#fe0000" stroke-width="0.8" stroke-linejoin="round"/></svg>
</body></html>
